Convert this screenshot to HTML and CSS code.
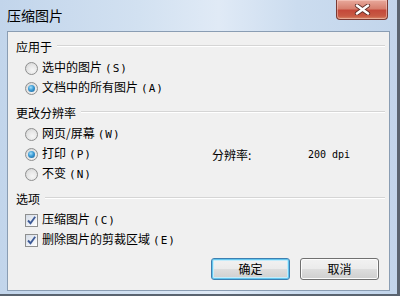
FILE: index.html
```html
<!DOCTYPE html>
<html lang="zh">
<head>
<meta charset="utf-8">
<link rel="stylesheet" href="styles.css">
</head>
<body>
<div class="window">
  <div class="titlebar">
    <span class="title">压缩图片</span>
    <span class="close">
      <svg width="17" height="11" viewBox="0 0 17 11">
        <path d="M3 1.5 L14 9.5 M14 1.5 L3 9.5" stroke="#5a2a24" stroke-width="4.2" stroke-linecap="round"/>
        <path d="M3 1.5 L14 9.5 M14 1.5 L3 9.5" stroke="#ffffff" stroke-width="2.6" stroke-linecap="round"/>
      </svg>
    </span>
  </div>
  <div class="content">
    <div class="group">
      <div class="legend"><span>应用于</span><i class="rule"></i></div>
      <div class="opt"><span class="radio"></span><span class="lbl">选中的图片<small>(S)</small></span></div>
      <div class="opt"><span class="radio on"></span><span class="lbl">文档中的所有图片<small>(A)</small></span></div>
    </div>
    <div class="group">
      <div class="legend"><span>更改分辨率</span><i class="rule"></i></div>
      <div class="resgrid">
        <div class="opt"><span class="radio"></span><span class="lbl">网页/屏幕<small>(W)</small></span></div>
        <div class="opt"><span class="radio on"></span><span class="lbl">打印<small>(P)</small></span></div>
        <div class="res"><span class="reslabel">分辨率:</span><span class="resval">200 dpi</span></div>
        <div class="opt"><span class="radio"></span><span class="lbl">不变<small>(N)</small></span></div>
      </div>
    </div>
    <div class="group">
      <div class="legend"><span>选项</span><i class="rule"></i></div>
      <div class="opt"><span class="check"><svg width="11" height="11" viewBox="0 0 11 11"><path d="M2 5.5 L4.5 8.2 L9.2 1.8" fill="none" stroke="#3d5a96" stroke-width="1.9"/></svg></span><span class="lbl">压缩图片<small>(C)</small></span></div>
      <div class="opt"><span class="check"><svg width="11" height="11" viewBox="0 0 11 11"><path d="M2 5.5 L4.5 8.2 L9.2 1.8" fill="none" stroke="#3d5a96" stroke-width="1.9"/></svg></span><span class="lbl">删除图片的剪裁区域<small>(E)</small></span></div>
    </div>
    <div class="buttons">
      <button class="btn default">确定</button>
      <button class="btn">取消</button>
    </div>
  </div>
</div>
</body>
</html>
```

FILE: styles.css
```css
* { box-sizing: border-box; }
html, body { margin: 0; padding: 0; }
body {
  width: 400px;
  height: 296px;
  overflow: hidden;
  font-family: "Noto Sans CJK SC", "DejaVu Sans", sans-serif;
  font-size: 12px;
  color: #000;
}
.window {
  width: 400px;
  height: 296px;
  display: flex;
  flex-direction: column;
  background: linear-gradient(to right, #c2d5eb 0%, #d2e1f1 35%, #e0eaf6 55%, #cbdcef 75%, #c2d5eb 100%);
  border-right: 3px solid #5a6470;
  border-bottom: 2px solid #5a6470;
}
.titlebar {
  height: 31px;
  flex: none;
  display: flex;
  align-items: flex-start;
  justify-content: space-between;
  padding-left: 7px;
  padding-right: 9px;
}
.title {
  font-size: 14px;
  line-height: 14px;
  margin-top: 8px;
  color: #000;
}
.close {
  width: 52px;
  height: 20px;
  display: flex;
  align-items: center;
  justify-content: center;
  border: 1px solid #7a3a33;
  border-top: none;
  border-radius: 0 0 4px 4px;
  background: linear-gradient(to bottom, #e8a99c 0%, #d7806f 45%, #c4493a 55%, #c85a44 85%, #d98a6a 100%);
  box-shadow: inset 0 0 0 1px rgba(255,220,210,0.45);
}
.close svg { display: block; }
.content {
  flex: none;
  height: 260px;
  margin-left: 7px;
  margin-right: 7px;
  border: 1px solid #8a9db3;
  background: #f0f0f0;
  padding: 4px 10px 0 0;
  display: flex;
  flex-direction: column;
}
.group { margin-bottom: 4px; }
.legend {
  height: 20px;
  display: flex;
  align-items: center;
  padding-left: 8px;
  margin-bottom: 2px;
}
.legend .rule {
  flex: 1;
  height: 2px;
  margin-left: 5px;
  margin-right: -6px;
  border-top: 1px solid #d5d5d5;
  border-bottom: 1px solid #ffffff;
}
.opt {
  height: 20px;
  display: flex;
  align-items: center;
  padding-left: 17px;
}
.lbl { margin-left: 4px; white-space: nowrap; line-height: 20px; }
.lbl small {
  font-family: "DejaVu Sans Mono", monospace;
  font-size: 11px;
  letter-spacing: 1px;
  margin-left: 3px;
}
.radio {
  width: 13px;
  height: 13px;
  flex: none;
  border-radius: 50%;
  border: 1px solid #8e8f8f;
  background: radial-gradient(circle at 60% 65%, #f6f6f6 0%, #e6e6e6 50%, #cfcfcf 100%);
  display: flex;
  align-items: center;
  justify-content: center;
}
.radio.on::after {
  content: "";
  width: 7px;
  height: 7px;
  border-radius: 50%;
  background: radial-gradient(circle at 40% 35%, #a6e0fa 0%, #3a9ad4 45%, #1c5e94 100%);
}
.check {
  width: 13px;
  height: 13px;
  flex: none;
  border: 1px solid #8e8f8f;
  background: linear-gradient(135deg, #d4dbe6 0%, #eef1f6 60%, #ffffff 100%);
  display: flex;
  align-items: center;
  justify-content: center;
}
.check svg { display: block; }
.resgrid {
  display: grid;
  grid-template-columns: 204px 1fr;
  grid-auto-rows: 20px;
}
.resgrid .opt:nth-child(1) { grid-column: 1; grid-row: 1; }
.resgrid .opt:nth-child(2) { grid-column: 1; grid-row: 2; }
.resgrid .res { grid-column: 2; grid-row: 2; }
.resgrid .opt:nth-child(4) { grid-column: 1; grid-row: 3; }
.res {
  display: flex;
  align-items: center;
  white-space: nowrap;
}
.reslabel { width: 96px; }
.resval {
  font-family: "DejaVu Sans Mono", monospace;
  font-size: 10px;
}
.buttons {
  margin-top: 4px;
  display: flex;
  justify-content: flex-end;
  gap: 10px;
}
.btn {
  width: 79px;
  height: 22px;
  padding: 0;
  font-family: "Noto Sans CJK SC", sans-serif;
  font-size: 12px;
  color: #000;
  border: 1px solid #707070;
  border-radius: 3px;
  background: linear-gradient(to bottom, #f2f2f2 0%, #ebebeb 48%, #dddddd 52%, #cfcfcf 100%);
  box-shadow: inset 0 0 0 1px #fcfcfc;
  line-height: 20px;
}
.btn.default {
  border-color: #3c7fb1;
  box-shadow: inset 0 0 0 1px #64c6ee, inset 0 0 0 2px #c4ecfb;
}
```
